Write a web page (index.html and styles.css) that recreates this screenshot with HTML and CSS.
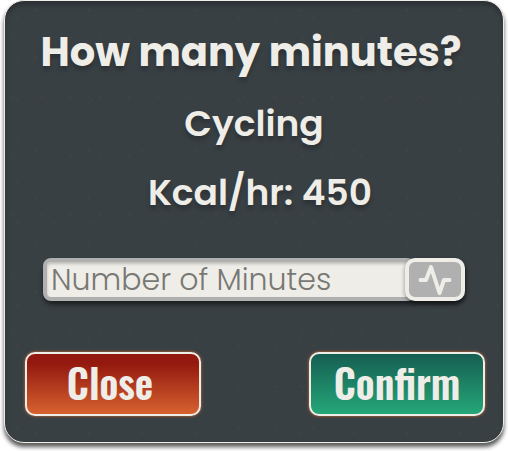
FILE: index.html
```html
<!DOCTYPE html>
<html lang="en">
<head>
<meta charset="utf-8">
<meta name="viewport" content="width=device-width, initial-scale=1">
<title>How many minutes?</title>
<link rel="stylesheet" href="styles.css">
</head>
<body>
<form class="dialog">
  <h1 class="title"><label for="minutes">How many minutes?</label></h1>
  <p class="detail">Cycling</p>
  <p class="detail rate">Kcal/hr: 450</p>
  <div class="field">
    <input class="field-input" id="minutes" type="text" inputmode="numeric" placeholder="Number of Minutes">
    <button class="field-button" type="button" aria-label="Activity">
      <svg class="pulse" viewBox="0 0 34 32" aria-hidden="true"><path d="M2.500 16H8L13 3L21.500 29L26 16H31.500"/></svg>
    </button>
  </div>
  <div class="actions">
    <button class="action close" type="button">Close</button>
    <button class="action confirm" type="submit">Confirm</button>
  </div>
</form>
</body>
</html>
```
FILE: styles.css
```css
* {
  box-sizing: border-box;
}

body {
  margin: 0;
  padding: 0 4px 8px;
  background: #fff;
  color: #efede7;
  font-family: Poppins, Inter, sans-serif;
}

.dialog {
  padding: 21px 18px 26px 20px;
  border: 1px solid #efede7;
  border-radius: 20px;
  background-color: #394044;
  background-image:
    radial-gradient(circle at 12px 17px, #4c4b4b 0, transparent 1px),
    radial-gradient(circle at 31px 9px, #4a4d4f 0, transparent 1px),
    radial-gradient(circle at 8px 37px, #4e4b4b 0, transparent 1px);
  background-size: 37px 41px, 53px 47px, 29px 59px;
  box-shadow: 0 4px 4px rgb(0 0 0 / 65%), inset 0 4px 4px rgb(0 0 0 / 25%);
}

.title,
.detail {
  margin: 0;
  text-align: center;
  text-shadow: 0 4px 4px rgb(0 0 0 / 25%);
  white-space: nowrap;
}

.title {
  padding-right: 8px;
  font-size: 40px;
  font-weight: 700;
  line-height: 60px;
}

.detail {
  margin-top: 14px;
  padding-right: 2px;
  font-size: 36px;
  font-weight: 600;
  line-height: 55px;
}

.rate {
  padding-left: 12px;
}

.field {
  display: flex;
  height: 43px;
  margin: 38px 20px 0 18px;
  border-radius: 10px;
  box-shadow: 0 4px 4px rgb(0 0 0 / 50%);
}

.field-input {
  flex: 1;
  min-width: 0;
  margin-right: -10px;
  padding: 0 4px;
  border: 4px solid #b0b0b0;
  border-radius: 8px;
  background: #efede7;
  box-shadow: inset 0 2px 3px rgb(0 0 0 / 20%);
  color: #394044;
  font: 300 30px Poppins, Inter, sans-serif;
}

.field-input::placeholder {
  color: #787874;
  opacity: 1;
}

.field-button {
  display: flex;
  align-items: center;
  justify-content: center;
  z-index: 1;
  width: 60px;
  padding: 0;
  border: 4px solid #efede7;
  border-radius: 10px;
  background: #b0b0b0;
  box-shadow: 0 2px 4px rgb(0 0 0 / 40%);
}

.pulse {
  width: 34px;
  height: 32px;
  fill: none;
  stroke: #efede7;
  stroke-width: 4;
  stroke-linecap: round;
  stroke-linejoin: round;
}

.actions {
  display: flex;
  justify-content: space-between;
  margin-top: 51px;
}

.action {
  width: 176px;
  height: 64px;
  padding: 0 0 4px;
  border: 2px solid #efede7;
  border-radius: 10px;
  box-shadow: 0 0 3px #e3702f;
  color: #efede7;
  font: 600 40px/52px Oswald, "Liberation Sans Narrow", "Roboto Condensed", sans-serif;
}

.close {
  padding-right: 6px;
  background: linear-gradient(#93180f 15%, #d7622f);
}

.confirm {
  background: linear-gradient(#165e52, #24a778);
}
```
